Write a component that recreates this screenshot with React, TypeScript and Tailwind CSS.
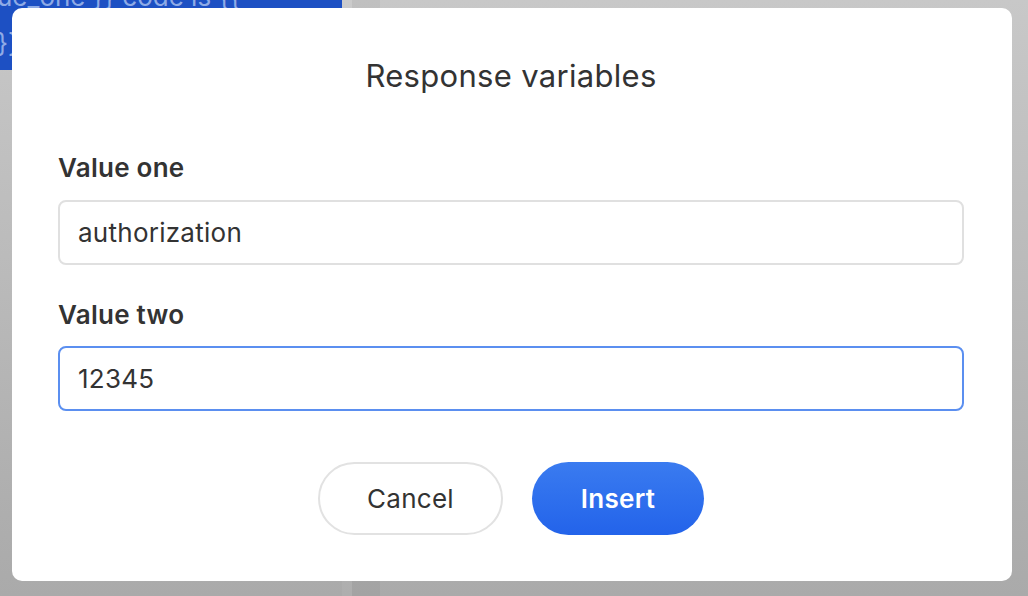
import React from "react";

export default function App() {
  return (
    <div
      className="relative w-[1028px] h-[596px] overflow-hidden flex bg-gradient-to-b from-[#c8c8c8] to-[#aaaaaa]"
      style={{ fontFamily: "Inter, 'Noto Sans', sans-serif" }}
    >
      <div className="w-[342px] flex flex-col">
        <div className="h-[70px] bg-[#1d50c3] text-[#8fabe6] text-[26px] leading-[46px] overflow-hidden">
          <div className="-mt-[26px] whitespace-pre -ml-[3px]">
            <div>{"ue_one }} code is {{"}</div>
            <div>{"}}"}</div>
          </div>
        </div>
        <div className="flex-1" />
      </div>
      <div className="w-[10px] bg-white/5" />
      <div className="w-[28px] bg-black/[0.04]" />
      <div className="flex-1" />

      <div className="absolute left-[12px] top-[8px] w-[1000px] h-[573px] bg-white rounded-[10px] flex flex-col pl-[46px] pr-[48px] pt-[50px]">
        <h1 className="text-center text-[31px] leading-[36px] tracking-[0.01em] text-[#333333] font-normal">
          Response variables
        </h1>
        <label className="mt-[60px] text-[26px] leading-[28px] tracking-[0.01em] font-semibold text-[#333333]">
          Value one
        </label>
        <div className="mt-[18px] h-[65px] rounded-[8px] border-2 border-[#e0e0e0] flex items-center px-[18px] text-[26px] tracking-[0.01em] text-[#333333]">
          authorization
        </div>
        <label className="mt-[36px] text-[26px] leading-[28px] tracking-[0.01em] font-semibold text-[#333333]">
          Value two
        </label>
        <div className="mt-[17px] h-[65px] rounded-[8px] border-2 border-[#5b8ff0] flex items-center px-[18px] text-[26px] tracking-[0.01em] text-[#333333]">
          12345
        </div>
        <div className="mt-[51px] flex justify-center gap-[29px]">
          <button className="w-[185px] h-[73px] rounded-full border-2 border-[#e2e2e2] bg-white text-[26px] tracking-[0.01em] text-[#333333]">
            Cancel
          </button>
          <button className="w-[172px] h-[73px] rounded-full bg-gradient-to-b from-[#3a7bf0] to-[#2363ea] text-[26px] tracking-[0.01em] font-semibold text-white">
            Insert
          </button>
        </div>
      </div>
    </div>
  );
}
